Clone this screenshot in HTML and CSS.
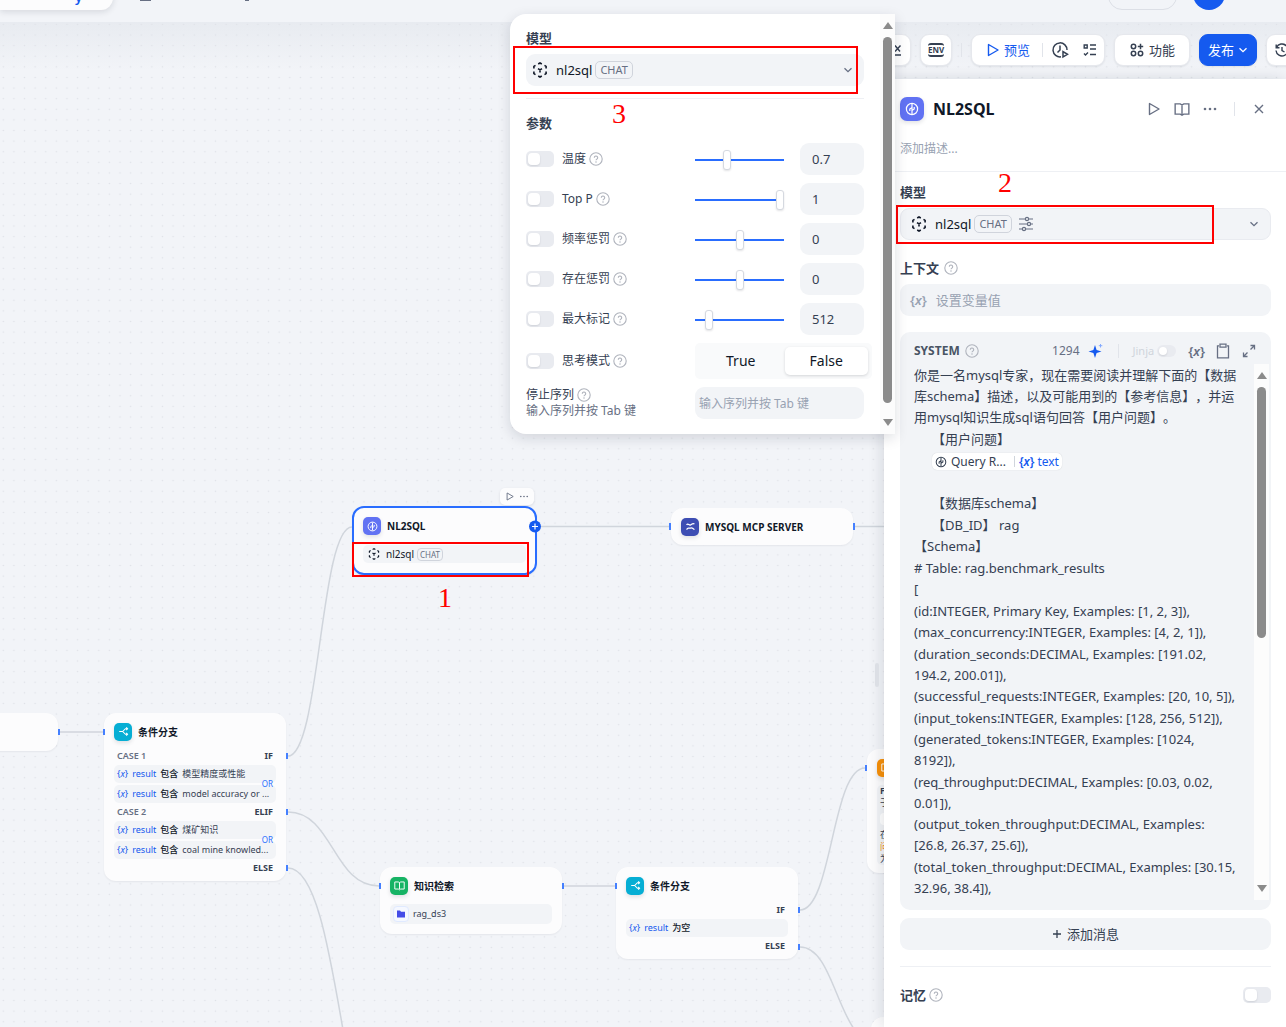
FILE: index.html
```html
<!DOCTYPE html>
<html lang="zh-CN">
<head>
<meta charset="utf-8">
<title>NL2SQL</title>
<link rel="stylesheet" href="styles.css">
</head>
<body>
<svg class="defs" aria-hidden="true">
  <symbol id="help" viewBox="0 0 14 14"><g fill="none" stroke="currentColor" stroke-width="1.1"><circle cx="7" cy="7" r="6.2"/><path d="M5.3 5.7a1.7 1.7 0 1 1 2.6 1.4c-.6.4-.9.6-.9 1.2"/></g><circle cx="7" cy="9.9" r=".75" fill="currentColor"/></symbol>
  <symbol id="model" viewBox="0 0 16 16"><g fill="none" stroke="currentColor" stroke-width="1.6"><path d="M6.2 2 8 1l1.800 1M12.500 3.400l1.600 1v2M14.100 9.600v2l-1.600 1M9.800 14 8 15l-1.800-1M3.500 12.600l-1.600-1v-2M1.900 6.400v-2l1.600-1"/><path d="M6 6.600l2 1.300 2-1.300M8 7.900v2.500"/></g></symbol>
  <symbol id="chev" viewBox="0 0 10 10"><path d="M1.500 3.200 5 6.700l3.500-3.500" fill="none" stroke="currentColor" stroke-width="1.300"/></symbol>
  <symbol id="play" viewBox="0 0 14 14"><path d="M2.500 1.500v11L12 7z" fill="none" stroke="currentColor" stroke-width="1.400" stroke-linejoin="round"/></symbol>
  <symbol id="more" viewBox="0 0 14 14"><g fill="currentColor"><circle cx="2" cy="7" r="1.300"/><circle cx="7" cy="7" r="1.300"/><circle cx="12" cy="7" r="1.300"/></g></symbol>
  <symbol id="brain" viewBox="0 0 14 14"><g fill="none" stroke="currentColor" stroke-width="1.200"><circle cx="7" cy="7" r="5.600"/><path d="M7 2v10M7 5.500 4.800 7v2M7 8.500l2.200-1.500V5"/></g></symbol>
  <symbol id="branch" viewBox="0 0 14 14"><path d="M1.500 7H6M12 3.500H9.500L6 7l3.500 3.500H12M10.500 1.800l1.700 1.700-1.700 1.700M10.500 8.800l1.700 1.700-1.700 1.700" fill="none" stroke="currentColor" stroke-width="1.300"/></symbol>
  <symbol id="book" viewBox="0 0 14 14"><path d="M7 3v8.500M1 2.500h4.500L7 3.500l1.500-1H13v9H8.500l-1.500 1-1.500-1H1z" fill="none" stroke="currentColor" stroke-width="1.200"/></symbol>
</svg>

<div class="app">
  <main class="canvas">
    <svg class="layer" aria-hidden="true">
      <defs><pattern id="dots" width="10.610" height="10.610" patternUnits="userSpaceOnUse" x="-2" y="19.100"><circle cx="5.300" cy="5.300" r=".8" fill="#dfe1e7"/></pattern></defs>
      <rect width="100%" height="100%" fill="url(#dots)"/>
    </svg>
    <div class="fade"></div>

    <section class="node n-start"></section>

    <section class="node n-case">
      <h3><span class="ico cyan"><svg><use href="#branch"/></svg></span>条件分支</h3>
      <div class="case"><span>CASE 1</span><b>IF</b></div>
      <div class="cond"><i class="v">{<em>x</em>}</i><a href="#">result</a><strong>包含</strong><span>模型精度或性能</span></div>
      <div class="cond"><i class="v">{<em>x</em>}</i><a href="#">result</a><strong>包含</strong><span>model accuracy or ...</span><small>OR</small></div>
      <div class="case"><span>CASE 2</span><b>ELIF</b></div>
      <div class="cond"><i class="v">{<em>x</em>}</i><a href="#">result</a><strong>包含</strong><span>煤矿知识</span></div>
      <div class="cond"><i class="v">{<em>x</em>}</i><a href="#">result</a><strong>包含</strong><span>coal mine knowled...</span><small>OR</small></div>
      <div class="case"><span></span><b>ELSE</b></div>
    </section>

    <div class="mini"><svg><use href="#play"/></svg><svg><use href="#more"/></svg></div>
    <section class="node n-sql">
      <h3><span class="ico indigo"><svg><use href="#brain"/></svg></span>NL2SQL</h3>
      <div class="model-row"><svg><use href="#model"/></svg>nl2sql<span class="chat">CHAT</span></div>
    </section>

    <section class="node n-mcp">
      <h3><span class="ico navy"><svg viewBox="0 0 14 14"><path d="M2 5c2-3 3 1 5 0s3-3 5-1M2 11c2-4 3-1 5-2s3 0 5 2" fill="none" stroke="currentColor" stroke-width="1.600"/></svg></span>MYSQL MCP SERVER</h3>
    </section>

    <section class="node n-know">
      <h3><span class="ico green"><svg><use href="#book"/></svg></span>知识检索</h3>
      <div class="dataset"><span class="folder"><svg viewBox="0 0 10 10"><path d="M1 1.500h3l1 1.200h4V8.500H1z" fill="#444ce7"/></svg></span>rag_ds3</div>
    </section>

    <section class="node n-if">
      <h3><span class="ico cyan"><svg><use href="#branch"/></svg></span>条件分支</h3>
      <div class="case"><span></span><b>IF</b></div>
      <div class="cond"><i class="v">{<em>x</em>}</i><a href="#">result</a><strong>为空</strong></div>
      <div class="case"><span></span><b>ELSE</b></div>
    </section>

    <section class="node n-answer">
      <h3><span class="ico orange"><svg><use href="#book"/></svg></span></h3>
      <div class="answer"><b>Fi</b><span>于</span><em></em><span>在</span><span class="hot">问</span><span>为</span></div>
    </section>
    <section class="node n-next"></section>

    <svg class="layer" aria-hidden="true">
      <g fill="none" stroke="#d0d5dc" stroke-width="1.500">
        <path d="M59 732H104"/><path d="M288 756C320 756 320 527 352 527"/><path d="M541 526.500H670"/><path d="M855 526.500H900"/>
        <path d="M288 812C333 812 333 886 379 886"/><path d="M288 868C342 868 342 1180 396 1180"/><path d="M564 886H616"/>
        <path d="M800 910C832 910 832 768 865 768"/><path d="M800 947C837 947 837 1045 880 1045"/>
      </g>
      <g fill="#4580ff">
        <path d="M58 729h2v6h-2zM103 729h2v6h-2zM286 753h2v6h-2zM286 809h2v6h-2zM286 865h2v6h-2zM669 523h2v7h-2zM853 523h2v7h-2zM379 883h2v6h-2zM562 883h2v6h-2zM615 883h2v6h-2zM798 907h2v6h-2zM798 944h2v6h-2zM865 765h2v6h-2z"/>
      </g>
      <circle cx="535" cy="526.500" r="6" fill="#155aef"/><path d="M532 526.500h6M535 523.500v6" stroke="#fff" stroke-width="1.200"/>
    </svg>
    <div class="mark mark-1"></div><span class="num num-1">1</span>
  </main>

  <header class="top">
    <div class="tab"><span>y</span></div>
    <span class="stub stub-a"></span><span class="stub stub-b"></span>
    <div class="pill"></div>
    <div class="avatar"></div>
  </header>

  <nav class="toolbar">
    <button class="sq" aria-label="会话变量"><svg viewBox="0 0 16 16" class="i16"><path d="M8 3.500l5 6M13.500 3.500l-5.500 6M2 13h12" fill="none" stroke="currentColor" stroke-width="1.400"/></svg></button>
    <button class="sq" aria-label="环境变量"><span class="env">ENV</span></button>
    <span class="sep"></span>
    <div class="group">
      <button class="preview"><svg class="i14"><use href="#play"/></svg>预览</button>
      <span class="sep"></span>
      <button aria-label="运行历史"><svg viewBox="0 0 18 18" class="i18"><path d="M10 15.800A7 7 0 1 1 16 9M9 4.500V9L6.500 11.500M12 10.500v5.500l4.500-2.700z" fill="none" stroke="currentColor" stroke-width="1.500"/></svg></button>
      <button aria-label="检查清单"><svg viewBox="0 0 16 16" class="i16"><path d="M2.200 3h3v3h-3zM8 3h6M8 7h6M8 12.500h6M2 11.500l1.500 1.500L6 10.500" fill="none" stroke="currentColor" stroke-width="1.400"/></svg></button>
    </div>
    <button class="feature"><svg viewBox="0 0 16 16" class="i16"><g fill="none" stroke="currentColor" stroke-width="1.500"><circle cx="4.500" cy="4.500" r="2.200"/><circle cx="4.500" cy="11.500" r="2.200"/><circle cx="11.500" cy="11.500" r="2.200"/><path d="M11.500 1.800v5.400M8.800 4.500h5.400"/></g></svg>功能</button>
    <button class="publish">发布<svg class="i10"><use href="#chev"/></svg></button>
    <button class="sq" aria-label="版本历史"><svg viewBox="0 0 16 16" class="i16"><path d="M2.500 5.500A6 6 0 1 1 2 8.500M2.200 2.500v3.300h3.300M8 5v3.500l2.500 1.500" fill="none" stroke="currentColor" stroke-width="1.400"/></svg></button>
  </nav>

  <aside class="panel">
    <span class="resizer"></span>
    <div class="panel-head">
      <span class="ico indigo big"><svg><use href="#brain"/></svg></span>
      <h2>NL2SQL</h2>
      <button aria-label="运行"><svg class="i14"><use href="#play"/></svg></button>
      <button aria-label="文档"><svg class="i16"><use href="#book"/></svg></button>
      <button aria-label="更多"><svg class="i14"><use href="#more"/></svg></button>
      <span class="sep"></span>
      <button aria-label="关闭"><svg viewBox="0 0 14 14" class="i14"><path d="M3 3l8 8M11 3l-8 8" stroke="currentColor" stroke-width="1.400"/></svg></button>
    </div>
    <p class="desc">添加描述...</p>
    <div class="panel-body">
      <h4>模型</h4>
      <button class="select bordered"><svg class="i16"><use href="#model"/></svg>nl2sql<span class="chat">CHAT</span><svg viewBox="0 0 16 16" class="i16 tune"><g fill="none" stroke="currentColor" stroke-width="1.200"><path d="M1 3h6M11 3h4M1 8h8M13 8h2M1 13h3M8 13h7"/><circle cx="9" cy="3" r="1.600"/><circle cx="11" cy="8" r="1.600"/><circle cx="6" cy="13" r="1.600"/></g></svg><svg class="i10 end"><use href="#chev"/></svg></button>
      <h4 class="ctx">上下文<svg class="help"><use href="#help"/></svg></h4>
      <button class="select context"><i class="v">{<em>x</em>}</i>设置变量值</button>

      <section class="prompt">
        <div class="prompt-head">
          <b>SYSTEM</b><svg class="help"><use href="#help"/></svg>
          <span class="count">1294</span>
          <svg viewBox="0 0 16 16" class="i16 spark"><path d="M7 2l1.600 4.900L13.500 8.500 8.600 10.100 7 15 5.400 10.100.5 8.500l4.900-1.600z" fill="#155aef"/><path d="M12.500 1v3.500M10.800 2.700h3.500" stroke="#84abff"/></svg>
          <span class="sep"></span>
          <label class="jinja">Jinja<input type="checkbox" class="toggle small" disabled></label>
          <i class="v">{<em>x</em>}</i>
          <svg viewBox="0 0 16 16" class="i16"><path d="M4 2.800H2.500v12h11v-12H12M5 1.200h6v3H5z" fill="none" stroke="currentColor" stroke-width="1.300"/></svg>
          <svg viewBox="0 0 16 16" class="i16"><path d="M9.500 6.500l4-4M9.500 2.500h4v4M6.500 9.500l-4 4M2.500 9.500v4h4" fill="none" stroke="currentColor" stroke-width="1.300"/></svg>
        </div>
        <div class="prompt-main">
          <div class="text">
            <p>你是一名mysql专家，现在需要阅读并理解下面的【数据<br>库schema】描述，以及可能用到的【参考信息】，并运<br>用mysql知识生成sql语句回答【用户问题】。</p>
            <p class="in">【用户问题】</p>
            <p class="in"><span class="token"><svg class="i12"><use href="#brain"/></svg>Query R... <s></s><a href="#"><i class="v">{<em>x</em>}</i>text</a></span></p>
            <p></p>
            <p class="in">【数据库schema】</p>
            <p class="in">【DB_ID】 rag</p>
            <p>【Schema】</p>
            <p># Table: rag.benchmark_results</p>
            <p>[</p>
            <p>(id:INTEGER, Primary Key, Examples: [1, 2, 3]),</p>
            <p>(max_concurrency:INTEGER, Examples: [4, 2, 1]),</p>
            <p>(duration_seconds:DECIMAL, Examples: [191.02,<br>194.2, 200.01]),</p>
            <p>(successful_requests:INTEGER, Examples: [20, 10, 5]),</p>
            <p>(input_tokens:INTEGER, Examples: [128, 256, 512]),</p>
            <p>(generated_tokens:INTEGER, Examples: [1024,<br>8192]),</p>
            <p>(req_throughput:DECIMAL, Examples: [0.03, 0.02,<br>0.01]),</p>
            <p>(output_token_throughput:DECIMAL, Examples:<br>[26.8, 26.37, 25.6]),</p>
            <p>(total_token_throughput:DECIMAL, Examples: [30.15,<br>32.96, 38.4]),</p>
          </div>
          <div class="bar"><i class="up"></i><i class="thumb half"></i><i class="down"></i></div>
        </div>
      </section>
      <button class="add"><svg viewBox="0 0 10 10" class="i10"><path d="M5 1v8M1 5h8" stroke="currentColor" stroke-width="1.300"/></svg>添加消息</button>
      <div class="memory"><label for="mem">记忆</label><svg class="help"><use href="#help"/></svg><input id="mem" type="checkbox" class="toggle"></div>
    </div>
    <div class="mark mark-2"></div><span class="num num-2">2</span>
  </aside>

  <div class="popover">
    <div class="pop-body">
      <h4>模型</h4>
      <button class="select"><svg class="i16"><use href="#model"/></svg>nl2sql<span class="chat">CHAT</span><svg class="i10 end"><use href="#chev"/></svg></button>
      <h4 class="params">参数</h4>
      <div class="param"><input type="checkbox" class="toggle" id="t1"><label for="t1">温度</label><svg class="help"><use href="#help"/></svg><input type="range" aria-label="温度" min="0" max="200" value="70"><input type="text" aria-label="温度值" value="0.7"></div>
      <div class="param"><input type="checkbox" class="toggle" id="t2"><label for="t2">Top P</label><svg class="help"><use href="#help"/></svg><input type="range" aria-label="Top P" min="0" max="100" value="100"><input type="text" aria-label="Top P 值" value="1"></div>
      <div class="param"><input type="checkbox" class="toggle" id="t3"><label for="t3">频率惩罚</label><svg class="help"><use href="#help"/></svg><input type="range" aria-label="频率惩罚" min="-200" max="200" value="0"><input type="text" aria-label="频率惩罚值" value="0"></div>
      <div class="param"><input type="checkbox" class="toggle" id="t4"><label for="t4">存在惩罚</label><svg class="help"><use href="#help"/></svg><input type="range" aria-label="存在惩罚" min="-200" max="200" value="0"><input type="text" aria-label="存在惩罚值" value="0"></div>
      <div class="param"><input type="checkbox" class="toggle" id="t5"><label for="t5">最大标记</label><svg class="help"><use href="#help"/></svg><input type="range" aria-label="最大标记" min="0" max="4096" value="512"><input type="text" aria-label="最大标记值" value="512"></div>
      <div class="param think"><input type="checkbox" class="toggle" id="t6"><label for="t6">思考模式</label><svg class="help"><use href="#help"/></svg><div class="seg"><button>True</button><button class="on">False</button></div></div>
      <div class="stop"><div class="stop-label"><label for="stop">停止序列<svg class="help"><use href="#help"/></svg></label><span>输入序列并按 Tab 键</span></div><input id="stop" type="text" placeholder="输入序列并按 Tab 键"></div>
    </div>
    <div class="bar"><i class="up"></i><i class="thumb"></i><i class="down"></i></div>
    <div class="mark mark-3"></div><span class="num num-3">3</span>
  </div>
</div>
</body>
</html>
```
FILE: styles.css
```css
* { box-sizing: border-box; margin: 0; padding: 0; }
body { font: 13px/20px "Noto Sans", "Noto Sans CJK SC", sans-serif; color: #354052; background: #f2f4f7; text-spacing-trim: space-all; }
button, input { font: inherit; color: inherit; border: 0; background: none; }
button { display: flex; align-items: center; justify-content: center; white-space: nowrap; }
a { color: #155aef; text-decoration: none; }
svg { flex: none; display: block; }
h2, h3, h4 { font-weight: 600; }
.defs { position: absolute; width: 0; height: 0; }
.i10 { width: 10px; height: 10px; }
.i12 { width: 12px; height: 12px; }
.i14 { width: 14px; height: 14px; }
.i16 { width: 16px; height: 16px; }
.i18 { width: 18px; height: 18px; }
.help { width: 14px; height: 14px; color: #b0b4bd; margin-left: 3px; }
.sep { width: 1px; height: 14px; background: #e1e4ea; }
.v { font-style: normal; font-weight: 600; white-space: nowrap; }

.app { position: relative; display: flex; flex-direction: column; height: 100vh; overflow: hidden; }

/* canvas */
.canvas { position: absolute; inset: 0; background: #f2f4f8; overflow: hidden; }
.layer { position: absolute; inset: 0; width: 100%; height: 100%; pointer-events: none; }
.fade { height: 70px; background: linear-gradient(rgba(225, 229, 235, .6) 22px, rgba(242, 244, 248, 0)); }
.node { position: absolute; width: 182px; padding: 9px 10px; background: #fcfcfd; border-radius: 12px; box-shadow: 0 1px 2px rgba(16, 24, 40, .06); font-size: 9px; line-height: 18px; }
.node h3 { display: flex; align-items: center; gap: 6px; height: 19px; font-size: 10px; font-weight: 700; color: #101828; white-space: nowrap; }
.ico { display: grid; place-items: center; flex: none; width: 18px; height: 18px; border-radius: 5px; color: #fff; box-shadow: 0 2px 4px rgba(16, 24, 40, .12); }
.ico svg { width: 11px; height: 11px; }
.cyan { background: #06aed4; }
.indigo { background: #6172f3; }
.navy { background: #3d4db3; }
.green { background: #16b364; }
.orange { background: #f79009; }
.big { width: 24px; height: 24px; border-radius: 7px; }
.big svg { width: 14px; height: 14px; }
.n-start { left: -124px; top: 713px; height: 38px; }
.n-case { left: 104px; top: 713px; height: 168px; }
.n-sql { left: 352px; top: 506px; width: 185px; height: 69px; padding: 9px; border: 2px solid #296dff; }
.n-mcp { left: 671px; top: 508px; height: 37px; }
.n-know { left: 380px; top: 867px; height: 67px; }
.n-if { left: 616px; top: 867px; height: 92px; }
.n-answer { left: 867px; top: 749px; height: 124px; }
.n-next { left: 871px; top: 1017px; height: 60px; }
.case { display: flex; justify-content: space-between; align-items: center; height: 18px; padding: 0 3px; color: #676f83; font-weight: 600; }
.case b { color: #354052; font-weight: 700; }
.node h3 + .case { margin-top: 6px; }
.cond { position: relative; display: flex; gap: 4px; height: 18px; padding: 0 3px; background: #f2f4f7; border-radius: 5px; white-space: nowrap; }
.cond + .cond { margin-top: 2px; }
.cond .v { color: #155aef; font-weight: 400; }
.cond strong { color: #101828; font-weight: 500; }
.cond small { position: absolute; right: 3px; top: -7px; font-size: 8px; line-height: 12px; color: #296dff; }
.mini { position: absolute; left: 500px; top: 488px; display: flex; align-items: center; gap: 4px; width: 34px; height: 17px; padding: 0 5px; background: #fcfcfd; border-radius: 5px; color: #676f83; box-shadow: 0 1px 3px rgba(16, 24, 40, .1); }
.mini svg { width: 10px; height: 9px; }
.n-sql h3 { height: 18px; }
.model-row { display: flex; align-items: center; height: 18px; margin-top: 10px; padding-left: 5px; background: #f2f4f7; border-radius: 5px; font-size: 10px; color: #101828; }
.model-row svg { width: 12px; height: 12px; margin-right: 6px; }
.chat { height: 18px; margin-left: 3px; padding: 0 4px; border: 1px solid #d0d4dc; border-radius: 5px; font-size: 11px; line-height: 16px; font-weight: 400; color: #676f83; }
.model-row .chat { height: 13px; padding: 0 2px; font-size: 8px; line-height: 11px; border-radius: 4px; }
.dataset { display: flex; align-items: center; gap: 4px; height: 20px; margin-top: 9px; padding-left: 3px; background: #f2f4f7; border-radius: 5px; }
.folder { display: grid; place-items: center; width: 16px; height: 16px; background: #f5f8ff; border: 1px solid #e0eaff; border-radius: 4px; }
.folder svg { width: 10px; height: 10px; }
.answer { display: flex; flex-direction: column; margin-top: 8px; padding: 0 3px; line-height: 12px; background: #f2f4f7; border-radius: 5px; }
.answer em { height: 12px; margin: 4px 0; background: #fff; border-radius: 4px; }
.hot { color: #f79009; }

/* annotations */
.mark { position: absolute; border: 2px solid #f00; }
.num { position: absolute; font: 28px/28px "Liberation Serif", serif; color: #f00; }
.mark-1 { left: 352px; top: 542px; width: 177px; height: 35px; }
.num-1 { left: 438px; top: 584px; }
.mark-2 { left: 12px; top: 126px; width: 318px; height: 39px; }
.num-2 { left: 114px; top: 90px; }
.mark-3 { left: 3px; top: 32px; width: 345px; height: 48px; }
.num-3 { left: 102px; top: 86px; }

/* top strip */
.top { position: relative; display: flex; align-items: flex-end; flex: none; height: 22px; padding-bottom: 12px; background: #f2f4f8; }
.tab { display: flex; justify-content: flex-end; align-items: flex-end; width: 113px; height: 32px; padding: 0 31px 3px 0; background: #fcfcfd; border-radius: 0 0 12px 0; box-shadow: 0 2px 6px rgba(16, 24, 40, .12); color: #155aef; font-weight: 600; line-height: 20px; }
.stub { align-self: flex-start; height: 1px; background: #676f83; }
.stub-a { width: 11px; margin-left: 27px; }
.stub-b { width: 4px; margin-left: 94px; }
.pill { width: 69px; height: 32px; margin-left: auto; border: 1px solid #dcdfe6; border-radius: 14px; }
.avatar { width: 32px; height: 32px; margin: 0 61px 0 16px; border-radius: 50%; background: #155aef; }

/* toolbar */
.toolbar { position: relative; display: flex; justify-content: flex-end; align-items: center; gap: 9px; height: 57px; padding-bottom: 1px; margin-right: -12px; color: #354052; }
.toolbar > button, .group { flex: none; height: 32px; background: #fff; border: 1px solid #e6e8ed; border-radius: 9px; box-shadow: 0 1px 2px rgba(16, 24, 40, .08); }
.toolbar .sq { width: 32px; }
.env { padding: 1px 0; border-top: 2px solid; border-bottom: 2px solid; border-radius: 3px; font-size: 8px; line-height: 8px; font-weight: 700; }
.group { display: flex; align-items: center; width: 134px; padding-left: 14px; gap: 4px; }
.group button { width: 26px; height: 30px; }
.group .preview { width: auto; gap: 4px; color: #155aef; }
.group .sep { margin-left: 8px; }
.feature { width: 76px; gap: 4px; }
.toolbar .publish { width: 58px; gap: 4px; background: #155aef; border-color: #155aef; color: #fff; }

/* node panel */
.panel { position: relative; align-self: flex-end; display: flex; flex-direction: column; flex: 1; width: 402px; background: #fff; box-shadow: -2px 0 14px rgba(16, 24, 40, .12); }
.resizer { position: absolute; left: -9px; top: 584px; width: 4px; height: 24px; border-radius: 2px; background: #dcdfe5; }
.panel-head { display: flex; align-items: center; height: 24px; margin: 18px 15px 0 16px; color: #676f83; }
.panel-head h2 { margin: 0 auto 0 9px; font-size: 16px; font-weight: 700; color: #101828; }
.panel-head button { width: 28px; height: 24px; }
.panel-head .sep { margin: 0 12px 0 10px; }
.panel-head button:last-child { width: 24px; }
.desc { margin-top: 18px; padding: 0 16px 12px; font-size: 12px; color: #98a2b2; border-bottom: 1px solid #eef0f4; }
.panel-body { display: flex; flex-direction: column; padding: 10px 15px 0 16px; }
h4 { display: flex; align-items: center; height: 20px; font-size: 13px; }
h4 .help { margin-left: 5px; }
.select { width: 100%; height: 32px; padding: 0 11px 0 6px; justify-content: flex-start; background: #f2f4f7; border-radius: 9px; color: #101828; }
.select > .i16:first-child { margin-right: 8px; }
.end { margin-left: auto; color: #676f83; }
.bordered { margin-top: 6px; padding-left: 10px; border: 1px solid #e9ebf0; }
.select .tune { margin-left: 6px; color: #676f83; }
.ctx { margin-top: 18px; }
.context { margin-top: 6px; padding-left: 10px; gap: 9px; color: #98a2b2; }
.prompt { display: flex; flex-direction: column; height: 578px; margin-top: 16px; background: #f2f4f7; border-radius: 10px; }
.prompt-head { display: flex; align-items: center; height: 32px; padding: 6px 14px 0 14px; gap: 10px; color: #676f83; }
.prompt-head b { font-weight: 700; font-size: 12px; color: #495464; }
.prompt-head .help { margin: 0 auto 0 -5px; }
.prompt-head .sep { margin: 0 4px; }
.count { font-size: 12px; }
.spark { margin-left: -2px; }
.jinja { display: flex; align-items: center; gap: 3px; margin-right: 2px; font-size: 11px; color: #d0d5dc; }
.prompt-main { display: flex; justify-content: space-between; height: 536px; padding: 0 2px 0 14px; }
.text { padding-top: 1px; line-height: 21px; white-space: nowrap; }
.text p { min-height: 21px; }
.text p:nth-child(odd) { margin-bottom: 1px; }
.text .in { padding-left: 18px; }
.token { display: inline-flex; align-items: center; gap: 4px; height: 17px; padding: 0 3px; background: #fff; border-radius: 5px; font-size: 12px; vertical-align: middle; box-shadow: 0 0 1px rgba(16, 24, 40, .2); }
.token s { width: 1px; height: 11px; margin-left: 4px; background: #d0d5dc; }
.token a { display: flex; gap: 3px; }
.bar { display: flex; flex-direction: column; align-items: center; flex: none; width: 15px; background: #fcfcfc; padding: 8px 0; }
.bar .up, .bar .down { border: 5px solid transparent; border-top: 0; border-bottom: 7px solid #8b8b8b; }
.bar .down { margin-top: auto; border-top: 7px solid #8b8b8b; border-bottom: 0; }
.bar .thumb { width: 9px; height: 366px; margin-top: 8px; border-radius: 5px; background: #8b8b8b; }
.bar .half { height: 251px; }
.add { height: 32px; margin-top: 8px; gap: 5px; background: #f2f4f7; border-radius: 9px; }
.memory { display: flex; align-items: center; height: 44px; margin-top: 16px; padding-top: 12px; border-top: 1px solid #eef0f4; font-weight: 600; }
.memory .toggle { margin-left: auto; }
.toggle { appearance: none; flex: none; width: 28px; height: 16px; padding: 2px; border-radius: 5px; background: #e9ebf0; }
.toggle::before { content: ""; display: block; width: 12px; height: 12px; border-radius: 4px; background: #fff; box-shadow: 0 1px 2px rgba(16, 24, 40, .12); }
.small { width: 19px; height: 12px; border-radius: 6px; }
.small::before { width: 8px; height: 8px; border-radius: 4px; }

/* model settings popover */
.popover { position: absolute; right: 391px; top: 14px; display: flex; justify-content: space-between; width: 385px; height: 420px; background: #fff; border-radius: 16px 0 0 16px; box-shadow: 0 4px 14px rgba(16, 24, 40, .14); }
.pop-body { width: 354px; padding: 14px 0 0 16px; }
.pop-body > .select { margin: 6px 0 12px; }
.params { height: 48px; border-top: 1px solid #eef0f4; }
.param { display: flex; align-items: center; height: 32px; margin-bottom: 8px; font-size: 12px; }
.param label { margin-left: 8px; white-space: nowrap; }
.params + .param { margin-top: -3px; }
.param [type=range] { appearance: none; width: 89px; height: 22px; margin: 2px 16px 0 auto; background: linear-gradient(#296dff, #296dff) center / 100% 2px no-repeat; }
.param [type=range]::-webkit-slider-thumb { appearance: none; width: 8px; height: 20px; border: 1px solid #d5d9e0; border-radius: 3px; background: #fff; box-shadow: 0 1px 2px rgba(16, 24, 40, .12); }
.param [type=text] { width: 64px; height: 32px; padding: 0 12px; border-radius: 9px; background: #f2f4f7; color: #354052; font-size: 13px; }
.think { height: 36px; }
.seg { display: flex; gap: 2px; width: 177px; height: 36px; margin: 0 -8px 0 auto; padding: 4px; border-radius: 5px; background: #f9fafb; font-size: 14px; color: #101828; }
.seg button { flex: 1; border-radius: 5px; }
.seg .on { background: #fff; box-shadow: 0 1px 3px rgba(16, 24, 40, .16); }
.stop { display: flex; justify-content: space-between; font-size: 12px; line-height: 16px; }
.stop-label { display: flex; flex-direction: column; color: #676f83; }
.stop label { display: flex; align-items: center; color: #354052; }
.stop input { width: 169px; height: 32px; padding: 0 4px; border-radius: 9px; background: #f2f4f7; }
.stop input::placeholder { color: #98a2b2; }
```
